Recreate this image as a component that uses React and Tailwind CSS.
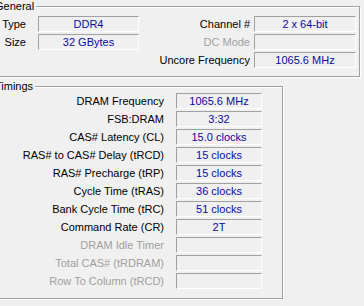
import React from 'react';

const general = [
  { left: { label: 'Type', value: 'DDR4' }, right: { label: 'Channel #', value: '2 x 64-bit' } },
  { left: { label: 'Size', value: '32 GBytes' }, right: { label: 'DC Mode', value: '', disabled: true } },
  { left: null, right: { label: 'Uncore Frequency', value: '1065.6 MHz' } },
];

const timings = [
  { label: 'DRAM Frequency', value: '1065.6 MHz' },
  { label: 'FSB:DRAM', value: '3:32' },
  { label: 'CAS# Latency (CL)', value: '15.0 clocks' },
  { label: 'RAS# to CAS# Delay (tRCD)', value: '15 clocks' },
  { label: 'RAS# Precharge (tRP)', value: '15 clocks' },
  { label: 'Cycle Time (tRAS)', value: '36 clocks' },
  { label: 'Bank Cycle Time (tRC)', value: '51 clocks' },
  { label: 'Command Rate (CR)', value: '2T' },
  { label: 'DRAM Idle Timer', value: '', disabled: true },
  { label: 'Total CAS# (tRDRAM)', value: '', disabled: true },
  { label: 'Row To Column (tRCD)', value: '', disabled: true },
];

// sunken static field, like a win32 edit box with no focus
const Field = ({ value, w }) => (
  <div className={`${w} h-[16px] leading-[14px] text-center text-[#0a0aa0] border-t border-l border-t-[#a0a0a0] border-l-[#a0a0a0] border-b border-r border-b-white border-r-white whitespace-nowrap`}>
    {value}
  </div>
);

const Label = ({ text, w, disabled }) => (
  <div className={`${w} h-[16px] leading-[16px] text-right whitespace-nowrap ${disabled ? 'text-[#a0a0a0]' : 'text-black'}`}>
    {text}
  </div>
);

const Group = ({ title, w, children, className }) => (
  <div className={`${w} border border-[#a0a0a0] shadow-[1px_1px_0_#fff,inset_1px_1px_0_#fff] ${className}`}>
    <div className="-mt-[7px] ml-[6px] h-[13px] leading-[13px] w-fit px-[2px] bg-[#f0f0f0]">{title}</div>
    {children}
  </div>
);

export default function App() {
  return (
    <div
      className="w-[364px] h-[306px] bg-[#f0f0f0] overflow-hidden pt-[6px] text-[11px]"
      style={{ fontFamily: '"Liberation Sans", Arial, sans-serif' }}
    >
      <div className="-ml-[14px] flex flex-col">
        <Group title="General" w="w-[374px]" className="pb-[8px]">
          <div className="mt-[3px] flex flex-col gap-[2px]">
            {general.map((row, i) => (
              <div key={i} className="flex">
                {row.left ? (
                  <>
                    <Label text={row.left.label} w="w-[39px]" />
                    <div className="ml-[12px]"><Field value={row.left.value} w="w-[101px]" /></div>
                  </>
                ) : (
                  <div className="w-[152px]" />
                )}
                <Label text={row.right.label} w="w-[111px]" disabled={row.right.disabled} />
                <div className="ml-[4px]"><Field value={row.right.value} w="w-[102px]" /></div>
              </div>
            ))}
          </div>
        </Group>

        <Group title="Timings" w="w-[297px]" className="mt-[9px] pb-[9px]">
          <div className="flex flex-col gap-[2px]">
            {timings.map((t) => (
              <div key={t.label} className="flex">
                <Label text={t.label} w="w-[177px]" disabled={t.disabled} />
                <div className="ml-[12px]"><Field value={t.value} w="w-[86px]" /></div>
              </div>
            ))}
          </div>
        </Group>
      </div>
    </div>
  );
}
